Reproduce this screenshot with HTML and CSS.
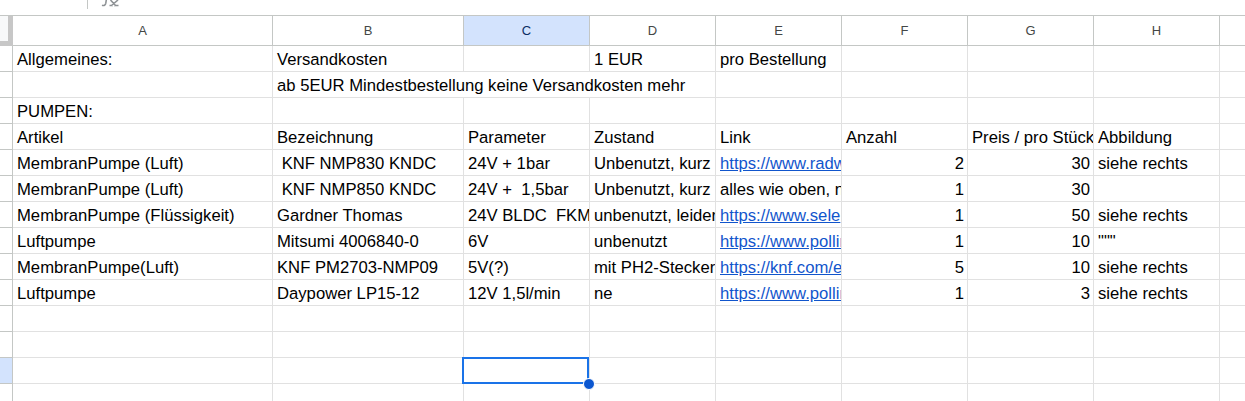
FILE: index.html
```html
<!DOCTYPE html>
<html lang="de">
<head>
    <meta charset="UTF-8" />
    <title>Pumpen - Tabelle</title>
    <link rel="stylesheet" href="styles.css">
</head>
<body>
    <div class="formula-bar">
        <span class="formula-divider"></span>
        <svg class="fx-icon" width="20" height="7" viewBox="0 0 20 7" aria-hidden="true">
            <path d="M1 5.200c2 .8 3.400 .2 3.800-2L5.300 0M9.500 0l5 5.500M17 0l-6.500 5.500M8.500 5.500h3.500M13 5.500h4.500" fill="none" stroke="#8e9295" stroke-width="1.600"/>
        </svg>
    </div>

    <div class="sheet">
        <div class="corner"></div>
        <div class="col-head">A</div>
        <div class="col-head">B</div>
        <div class="col-head active">C</div>
        <div class="col-head">D</div>
        <div class="col-head">E</div>
        <div class="col-head">F</div>
        <div class="col-head">G</div>
        <div class="col-head">H</div>
        <div class="col-head"></div>

        <div class="row-head"></div>
        <div class="cell">Allgemeines:</div>
        <div class="cell">Versandkosten</div>
        <div class="cell"></div>
        <div class="cell">1 EUR</div>
        <div class="cell">pro Bestellung</div>
        <div class="cell"></div>
        <div class="cell"></div>
        <div class="cell"></div>
        <div class="cell"></div>

        <div class="row-head"></div>
        <div class="cell"></div>
        <div class="cell span-3">ab 5EUR Mindestbestellung keine Versandkosten mehr</div>
        <div class="cell"></div>
        <div class="cell"></div>
        <div class="cell"></div>
        <div class="cell"></div>
        <div class="cell"></div>

        <div class="row-head"></div>
        <div class="cell">PUMPEN:</div>
        <div class="cell"></div>
        <div class="cell"></div>
        <div class="cell"></div>
        <div class="cell"></div>
        <div class="cell"></div>
        <div class="cell"></div>
        <div class="cell"></div>
        <div class="cell"></div>

        <div class="row-head"></div>
        <div class="cell">Artikel</div>
        <div class="cell">Bezeichnung</div>
        <div class="cell">Parameter</div>
        <div class="cell">Zustand</div>
        <div class="cell">Link</div>
        <div class="cell">Anzahl</div>
        <div class="cell">Preis / pro Stück</div>
        <div class="cell">Abbildung</div>
        <div class="cell"></div>

        <div class="row-head"></div>
        <div class="cell">MembranPumpe (Luft)</div>
        <div class="cell">&nbsp;KNF NMP830 KNDC</div>
        <div class="cell">24V + 1bar</div>
        <div class="cell">Unbenutzt, kurz</div>
        <div class="cell"><a href="#">https://www.radw</a></div>
        <div class="cell num">2</div>
        <div class="cell num">30</div>
        <div class="cell">siehe rechts</div>
        <div class="cell"></div>

        <div class="row-head"></div>
        <div class="cell">MembranPumpe (Luft)</div>
        <div class="cell">&nbsp;KNF NMP850 KNDC</div>
        <div class="cell">24V + &nbsp;1,5bar</div>
        <div class="cell">Unbenutzt, kurz</div>
        <div class="cell">alles wie oben, nur</div>
        <div class="cell num">1</div>
        <div class="cell num">30</div>
        <div class="cell"></div>
        <div class="cell"></div>

        <div class="row-head"></div>
        <div class="cell">MembranPumpe (Flüssigkeit)</div>
        <div class="cell">Gardner Thomas</div>
        <div class="cell">24V BLDC &nbsp;FKM</div>
        <div class="cell">unbenutzt, leider</div>
        <div class="cell"><a href="#">https://www.sele</a></div>
        <div class="cell num">1</div>
        <div class="cell num">50</div>
        <div class="cell">siehe rechts</div>
        <div class="cell"></div>

        <div class="row-head"></div>
        <div class="cell">Luftpumpe</div>
        <div class="cell">Mitsumi 4006840-0</div>
        <div class="cell">6V</div>
        <div class="cell">unbenutzt</div>
        <div class="cell"><a href="#">https://www.pollin</a></div>
        <div class="cell num">1</div>
        <div class="cell num">10</div>
        <div class="cell">"""</div>
        <div class="cell"></div>

        <div class="row-head"></div>
        <div class="cell">MembranPumpe(Luft)</div>
        <div class="cell">KNF PM2703-NMP09</div>
        <div class="cell">5V(?)</div>
        <div class="cell">mit PH2-Stecker</div>
        <div class="cell"><a href="#">https://knf.com/en</a></div>
        <div class="cell num">5</div>
        <div class="cell num">10</div>
        <div class="cell">siehe rechts</div>
        <div class="cell"></div>

        <div class="row-head"></div>
        <div class="cell">Luftpumpe</div>
        <div class="cell">Daypower LP15-12</div>
        <div class="cell">12V 1,5l/min</div>
        <div class="cell">ne</div>
        <div class="cell"><a href="#">https://www.pollin</a></div>
        <div class="cell num">1</div>
        <div class="cell num">3</div>
        <div class="cell">siehe rechts</div>
        <div class="cell"></div>

        <div class="row-head"></div>
        <div class="cell"></div><div class="cell"></div><div class="cell"></div><div class="cell"></div>
        <div class="cell"></div><div class="cell"></div><div class="cell"></div><div class="cell"></div><div class="cell"></div>

        <div class="row-head"></div>
        <div class="cell"></div><div class="cell"></div><div class="cell"></div><div class="cell"></div>
        <div class="cell"></div><div class="cell"></div><div class="cell"></div><div class="cell"></div><div class="cell"></div>

        <div class="row-head active"></div>
        <div class="cell"></div>
        <div class="cell"></div>
        <div class="cell selected"><span class="sel-box"></span><span class="fill-handle"></span></div>
        <div class="cell"></div>
        <div class="cell"></div>
        <div class="cell"></div>
        <div class="cell"></div>
        <div class="cell"></div>
        <div class="cell"></div>

        <div class="row-head"></div>
        <div class="cell"></div><div class="cell"></div><div class="cell"></div><div class="cell"></div>
        <div class="cell"></div><div class="cell"></div><div class="cell"></div><div class="cell"></div><div class="cell"></div>
    </div>
</body>
</html>
```

FILE: styles.css
```css
:root {
    --line: #e1e1e1;
    --head-line: #c4c7c5;
    --active: #d3e3fd;
    --blue: #1a73e8;
}

html, body {
    margin: 0;
    height: 100%;
    overflow: hidden;
    background-color: #ffffff;
}

body {
    font-family: "Liberation Sans", Arial, sans-serif;
    color: #000000;
}

.formula-bar {
    height: 15px;
    display: flex;
    align-items: flex-start;
    padding-left: 87px;
    gap: 13px;
    overflow: hidden;
}

.formula-divider {
    width: 1px;
    height: 9px;
    background-color: #c4c7c5;
}

.sheet {
    display: grid;
    grid-template-columns: 13px 260px 191px 126px 126px 126px 126px 126px 126px 26px;
    grid-template-rows: 30px;
    grid-auto-rows: 26px;
    border-top: 1px solid var(--head-line);
}

.corner {
    background-color: #f8f9fa;
    border-right: 5px solid #c7c7c7;
    border-bottom: 5px solid #c7c7c7;
    box-sizing: border-box;
}

.col-head {
    display: flex;
    align-items: center;
    justify-content: center;
    font-size: 13px;
    color: #444746;
    border-right: 1px solid var(--head-line);
    border-bottom: 1px solid var(--head-line);
    box-sizing: border-box;
}

.col-head.active,
.row-head.active {
    background-color: var(--active);
    color: #0b2e63;
}

.row-head {
    border-right: 1px solid var(--head-line);
    border-bottom: 1px solid var(--head-line);
    box-sizing: border-box;
}

.cell {
    position: relative;
    box-sizing: border-box;
    border-right: 1px solid var(--line);
    border-bottom: 1px solid var(--line);
    padding: 5px 3px 0 4px;
    font-size: 16.67px;
    line-height: 18px;
    white-space: nowrap;
    overflow: hidden;
}

.cell a {
    color: #1155cc;
}

.num {
    text-align: right;
}

.span-3 {
    grid-column: span 3;
}

.selected {
    overflow: visible;
    z-index: 2;
}

.sel-box {
    position: absolute;
    top: -1px;
    left: -2px;
    right: 0;
    bottom: -1px;
    border: 2px solid var(--blue);
}

.fill-handle {
    position: absolute;
    right: -6px;
    bottom: -7px;
    width: 12px;
    height: 12px;
    box-sizing: border-box;
    border: 1px solid #ffffff;
    border-radius: 50%;
    background-color: #0b57d0;
}
```
